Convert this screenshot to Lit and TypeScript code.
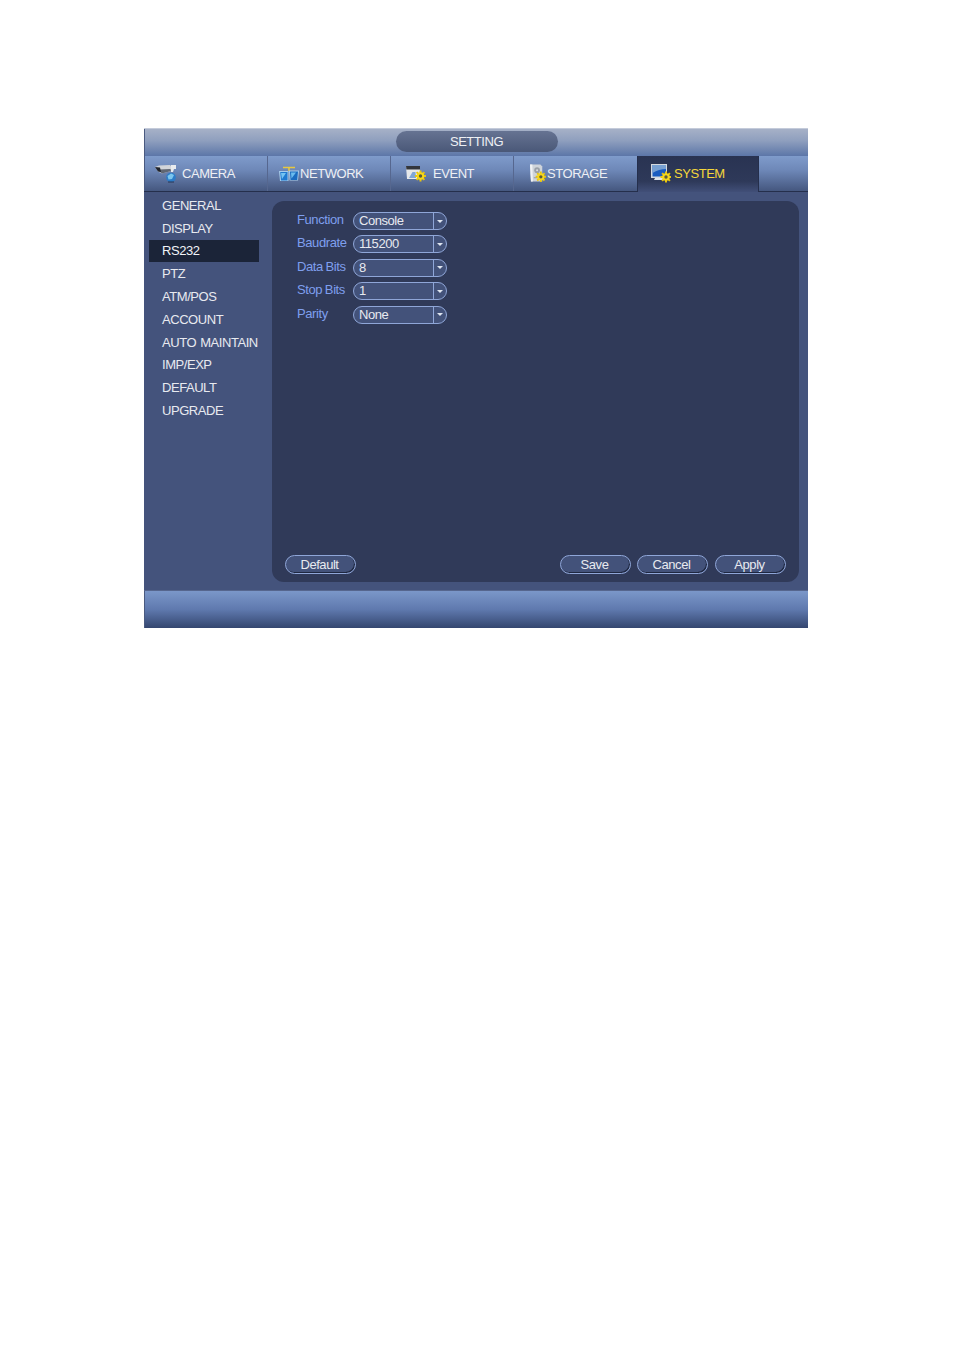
import { LitElement, html, css, svg } from "lit";
import { customElement } from "lit/decorators.js";

const gear = (x: number, y: number) => svg`
  <g transform="translate(${x} ${y})">
    <path d="M0-5.5V5.5M-5.5 0H5.5M-3.9-3.9L3.9 3.9M-3.9 3.9L3.9-3.9" stroke="#e9c40c" stroke-width="2"/>
    <circle r="3.8" fill="#f6d71a"/>
    <circle r="1.7" fill="#5a5a3a"/>
  </g>`;

const icons: Record<string, unknown> = {
  CAMERA: svg`<svg width="23" height="19" viewBox="0 0 23 19">
    <path d="M0 3L4 1.5L15 1L17 3L16 7L7 9.5L3 7.5Z" fill="#d2d5da"/>
    <path d="M4 7L7 9.5L16 7L15.5 5L5 5.5Z" fill="#5f6672"/>
    <path d="M0 3L5 3.5L6 8L3 7.5Z" fill="#20242c"/>
    <path d="M16 1H21V5H19L18 8H16Z" fill="#e9ebee"/>
    <circle cx="16" cy="13.5" r="4.8" fill="#2c7cc8"/>
    <path d="M12.5 12L16 9.5L19 11L17 15L13.5 15.5Z" fill="#7cc6ee"/>
    <path d="M13 18L19 18" stroke="#2b3550" stroke-width="1"/>
  </svg>`,
  NETWORK: svg`<svg width="20" height="16" viewBox="0 0 20 16">
    <path d="M4 1.5H16M10 1V5" stroke="#e6c840" stroke-width="1.6"/>
    <path d="M0 5H9.5V15H1Z" fill="#a9cdea"/>
    <path d="M10 4.5H20L19 14.5H10.5Z" fill="#a9cdea"/>
    <path d="M1.2 6H8.5V14.5H2Z" fill="#1f7ad0"/>
    <path d="M11 5.5H19L18.2 14H11.5Z" fill="#1a6cc0"/>
    <path d="M2 7H7L3 13Z" fill="#74c4f2"/>
    <path d="M12 6.5H17L12.5 12.5Z" fill="#6abcee"/>
  </svg>`,
  EVENT: svg`<svg width="20" height="17" viewBox="0 0 20 17">
    <path d="M0 1H14V14H1Z" fill="#e6e8ea"/>
    <path d="M0 1H14V4.5H0.4Z" fill="#33363c"/>
    <path d="M3 13L6.5 7H9.5L10 13Z" fill="#7fa6d8"/>
    ${gear(14.5, 11)}
  </svg>`,
  STORAGE: svg`<svg width="18" height="19" viewBox="0 0 18 19">
    <path d="M0 0H11L13 2V18H1Z" fill="#cfd4da"/>
    <path d="M0 0H2.5L3 18H1Z" fill="#f0f2f4"/>
    <circle cx="7.5" cy="6" r="3" fill="#9aa0a8"/>
    <circle cx="7.5" cy="6" r="1" fill="#dfe2e6"/>
    <path d="M4 14H8" stroke="#8f959e"/>
    ${gear(11.5, 13)}
  </svg>`,
  SYSTEM: svg`<svg width="20" height="19" viewBox="0 0 20 19">
    <rect x="0" y="0" width="16" height="14" fill="#d3d8de"/>
    <rect x="1.5" y="1" width="13.5" height="11.5" fill="#1a5cc0"/>
    <path d="M1.5 1H15V5Q8 5 1.5 9Z" fill="#77a0d2"/>
    <path d="M4 14H12L13 16H3Z" fill="#dfe3e8"/>
    ${gear(15, 13)}
  </svg>`,
};

const tabs = ["CAMERA", "NETWORK", "EVENT", "STORAGE", "SYSTEM"];
const menu = ["GENERAL", "DISPLAY", "RS232", "PTZ", "ATM/POS", "ACCOUNT", "AUTO MAINTAIN", "IMP/EXP", "DEFAULT", "UPGRADE"];
const fields = [
  ["Function", "Console"],
  ["Baudrate", "115200"],
  ["Data Bits", "8"],
  ["Stop Bits", "1"],
  ["Parity", "None"],
];

@customElement("app-root")
export class AppRoot extends LitElement {
  static styles = css`
    :host {
      display: block;
      height: 1348px;
      background: #fff;
      padding: 128px 0 0 144px;
      box-sizing: border-box;
      font-family: "Liberation Sans", Arial, sans-serif;
      font-size: 13px;
      letter-spacing: -0.45px;
    }
    .win { width: 664px; height: 500px; display: flex; flex-direction: column; background: #44537c; }
    .title {
      height: 28px; display: flex; align-items: center; justify-content: center;
      background: linear-gradient(#a8b2c8, #8f9fbe 45%, #5c76a8);
      box-shadow: inset 0 1px 0 #c4cbda, inset 1px 0 0 #4a5a80;
    }
    .pill {
      width: 162px; height: 21px; margin: 0 0 1px 1px; border-radius: 11px;
      display: flex; align-items: center; justify-content: center; color: #eef0f4;
      background: linear-gradient(#667392, #4a5878);
    }
    .tabs {
      height: 36px; display: flex; box-sizing: border-box;
      background: linear-gradient(#7f9bcb, #6e88b8 40%, #45577f);
      border-bottom: 1px solid #252f4c;
      box-shadow: inset 1px 0 0 #4a5a80;
    }
    .tab {
      width: 123px; display: flex; align-items: center; color: #eef0f4; position: relative; box-sizing: border-box;
    }
    .tab:first-child { width: 124px; }
    .sep { border-right: 1px solid #56678f; }
    .tab.on {
      background: linear-gradient(#293352, #2e3959 70%, #414f78); color: #f4d63b; height: 36px; width: 122px;
      padding-bottom: 1px;
      border-left: 1px solid #252f4c; border-right: 1px solid #252f4c;
    }
    .ico { flex: none; display: flex; box-sizing: border-box; }
    .ico svg { display: block; }
    .t-CAMERA .ico { width: 38px; padding-left: 11px; }
    .t-NETWORK .ico { width: 32px; padding-left: 11px; }
    .t-EVENT .ico { width: 42px; padding-left: 15px; }
    .t-STORAGE .ico { width: 33px; padding-left: 16px; }
    .t-SYSTEM .ico { width: 36px; padding-left: 13px; }
    .body { flex: 1; display: flex; min-height: 0; }
    .side { width: 128px; padding: 2px 0 0 5px; box-sizing: border-box; }
    .item {
      width: 110px; height: 22.8px; display: flex; align-items: center; padding-left: 13px; box-sizing: border-box;
      color: #e8eaf0; white-space: nowrap; word-spacing: 1px;
    }
    .item.on { background: #1b2438; color: #f2f4f8; }
    .panel {
      width: 527px; height: 381px; margin-top: 9px; border-radius: 12px; background: #303a59;
      display: flex; flex-direction: column; justify-content: space-between;
      padding: 7px 13px 8px 13px; box-sizing: border-box;
    }
    .rows { display: grid; grid-template-columns: 56px 94px; row-gap: 3.45px; padding: 4px 0 0 12px; }
    .lab {
      color: #7f9fee; height: 20px; line-height: 15px; white-space: nowrap;
      letter-spacing: -0.4px; word-spacing: -0.5px;
    }
    .sel {
      height: 18px; box-sizing: border-box; border: 1px solid #8fa6d8; border-radius: 9px; background: #43527a;
      color: #e8eaf0; display: flex; align-items: center; padding: 0 0 1px 5px; position: relative;
    }
    .arrow {
      position: absolute; right: 0; top: 0; bottom: 0; width: 12px; border-left: 1px solid #8fa6d8;
      display: flex; align-items: center; justify-content: center;
    }
    .arrow::after {
      content: ""; border-left: 3px solid transparent; border-right: 3px solid transparent;
      border-top: 3px solid #dfe5f0;
    }
    .acts { display: flex; justify-content: space-between; }
    .right { display: flex; gap: 7px; }
    .right .btn:first-child { margin-right: -1px; }
    .btn {
      width: 71px; height: 19px; box-sizing: border-box; border: 1px solid #8fa6d8; border-radius: 10px;
      background: #43527a; color: #e8eaf0; display: flex; align-items: center; justify-content: center;
      padding-right: 2px;
      box-shadow: inset -1px -1px 0 #1e2740;
    }
    .foot {
      height: 38px; flex: none; box-sizing: border-box; border-top: 1px solid #56668e;
      background: linear-gradient(#7b97c9, #5f79ae 50%, #34466f);
      box-shadow: inset 1px 0 0 #4a5a80;
    }
  `;

  render() {
    return html`<div class="win">
      <div class="title"><div class="pill">SETTING</div></div>
      <div class="tabs">
        ${tabs.map((t, i) => html`<div class="tab t-${t} ${t === "SYSTEM" ? "on" : i < 3 ? "sep" : ""}">
          <span class="ico">${icons[t]}</span>${t}
        </div>`)}
      </div>
      <div class="body">
        <div class="side">
          ${menu.map((m) => html`<div class="item ${m === "RS232" ? "on" : ""}">${m}</div>`)}
        </div>
        <div class="panel">
          <div class="rows">
            ${fields.map(([l, v]) => html`<div class="lab">${l}</div>
              <div class="sel">${v}<span class="arrow"></span></div>`)}
          </div>
          <div class="acts">
            <div class="btn">Default</div>
            <div class="right">
              <div class="btn">Save</div><div class="btn">Cancel</div><div class="btn">Apply</div>
            </div>
          </div>
        </div>
      </div>
      <div class="foot"></div>
    </div>`;
  }
}
